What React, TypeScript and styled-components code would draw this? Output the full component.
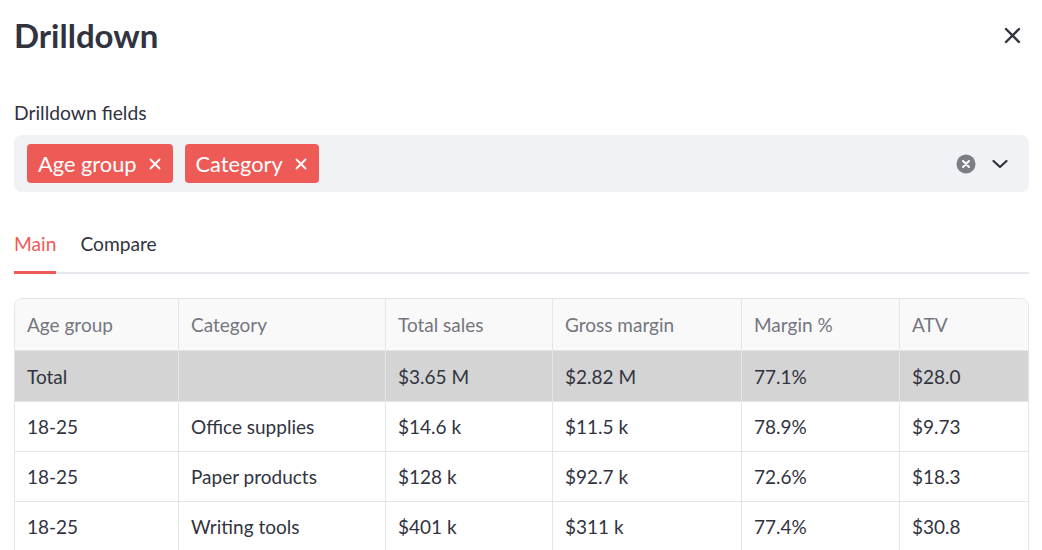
import React from "react";
import styled, { createGlobalStyle } from "styled-components";

const Global = createGlobalStyle`
  html, body { margin: 0; padding: 0; background: #fff; }
  body { font-family: "Lato", "Noto Sans", sans-serif; color: #31333f; overflow: hidden; }
  * { box-sizing: border-box; }
`;

const Page = styled.div`
  width: 1042px;
  height: 550px;
  padding: 0 13px 0 14px;
  overflow: hidden;
`;

const Header = styled.div`
  height: 70px;
  display: flex;
  align-items: center;
  justify-content: space-between;
`;

const Title = styled.h1`
  margin: 0;
  font-size: 33px;
  font-weight: 700;
  color: #31333f;
`;

const CloseBtn = styled.button`
  border: 0;
  background: none;
  padding: 0;
  margin-right: 8px;
  display: flex;
  color: #31333f;
`;

const Label = styled.div`
  margin-top: 31px;
  font-size: 19.3px;
  line-height: 23px;
  color: #31333f;
`;

const Select = styled.div`
  margin-top: 11px;
  height: 57px;
  background: #f0f2f6;
  border-radius: 8px;
  display: flex;
  align-items: center;
  padding: 0 21px 0 13px;
  gap: 12px;
`;

const Chip = styled.span`
  height: 39px;
  background: #ee5b57;
  color: #fff;
  border-radius: 4px;
  display: inline-flex;
  align-items: center;
  padding: 0 12px 0 11px;
  font-size: 21.8px;
  gap: 12px;
`;

const Spacer = styled.div`
  flex: 1;
`;

const ClearIcon = styled.span`
  display: inline-flex;
  align-items: center;
  justify-content: center;
  margin-right: 4px;
`;

const Chevron = styled.span`
  display: inline-flex;
  align-items: center;
  justify-content: center;
`;

const Tabs = styled.div`
  margin-top: 37px;
  display: flex;
  gap: 24px;
  border-bottom: 2px solid #e6e8ee;
  height: 45px;
`;

const Tab = styled.div<{ $active?: boolean }>`
  font-size: 19.2px;
  color: ${(p) => (p.$active ? "#ee5b57" : "#31333f")};
  padding-top: 3px;
  height: 45px;
  margin-bottom: -2px;
  border-bottom: 3px solid ${(p) => (p.$active ? "#ee5b57" : "transparent")};
`;

const Table = styled.div`
  margin-top: 24px;
  border: 1px solid #e4e5e8;
  border-radius: 8px 8px 0 0;
  overflow: hidden;
  display: grid;
  grid-template-columns: 164px 207px 167px 189px 158px 1fr;
`;

const Cell = styled.div<{ $kind: "head" | "total" | "body" }>`
  height: ${(p) => (p.$kind === "head" ? "52px" : p.$kind === "total" ? "51px" : "50px")};
  display: flex;
  align-items: center;
  padding-left: 12px;
  font-size: 19px;
  border-right: 1px solid #e4e5e8;
  border-bottom: 1px solid #e4e5e8;
  background: ${(p) =>
    p.$kind === "head" ? "#f9f9fa" : p.$kind === "total" ? "#d4d4d4" : "#fff"};
  color: ${(p) => (p.$kind === "head" ? "#74767f" : "#31333f")};
  &:nth-child(6n) { border-right: 0; }
`;

const headers = ["Age group", "Category", "Total sales", "Gross margin", "Margin %", "ATV"];
const total = ["Total", "", "$3.65 M", "$2.82 M", "77.1%", "$28.0"];
const rows = [
  ["18-25", "Office supplies", "$14.6 k", "$11.5 k", "78.9%", "$9.73"],
  ["18-25", "Paper products", "$128 k", "$92.7 k", "72.6%", "$18.3"],
  ["18-25", "Writing tools", "$401 k", "$311 k", "77.4%", "$30.8"],
];

const SmallX = () => (
  <svg width="12" height="12" viewBox="0 0 12 12">
    <path d="M1.5 1.5 L10.5 10.5 M10.5 1.5 L1.5 10.5" stroke="#fff" strokeWidth="1.8" strokeLinecap="round" />
  </svg>
);

export default function App() {
  return (
    <Page>
      <Global />
      <Header>
        <Title>Drilldown</Title>
        <CloseBtn>
          <svg width="17" height="17" viewBox="0 0 17 17">
            <path d="M2 2 L15 15 M15 2 L2 15" stroke="#31333f" strokeWidth="2.4" strokeLinecap="round" />
          </svg>
        </CloseBtn>
      </Header>
      <Label>Drilldown fields</Label>
      <Select>
        <Chip>
          Age group <SmallX />
        </Chip>
        <Chip>
          Category <SmallX />
        </Chip>
        <Spacer />
        <ClearIcon>
          <svg width="20" height="20" viewBox="0 0 20 20">
            <circle cx="10" cy="10" r="9.5" fill="#7d7e83" />
            <path d="M7 7 L13 13 M13 7 L7 13" stroke="#fff" strokeWidth="2" strokeLinecap="round" />
          </svg>
        </ClearIcon>
        <Chevron>
          <svg width="16" height="16" viewBox="0 0 16 16">
            <path d="M1.5 5 L8 11 L14.5 5" stroke="#31333f" strokeWidth="2.2" fill="none" strokeLinecap="round" strokeLinejoin="round" />
          </svg>
        </Chevron>
      </Select>
      <Tabs>
        <Tab $active>Main</Tab>
        <Tab>Compare</Tab>
      </Tabs>
      <Table>
        {headers.map((h) => (
          <Cell key={h} $kind="head">{h}</Cell>
        ))}
        {total.map((t, i) => (
          <Cell key={"t" + i} $kind="total">{t}</Cell>
        ))}
        {rows.map((r, ri) =>
          r.map((c, ci) => (
            <Cell key={ri + "-" + ci} $kind="body">{c}</Cell>
          ))
        )}
      </Table>
    </Page>
  );
}
